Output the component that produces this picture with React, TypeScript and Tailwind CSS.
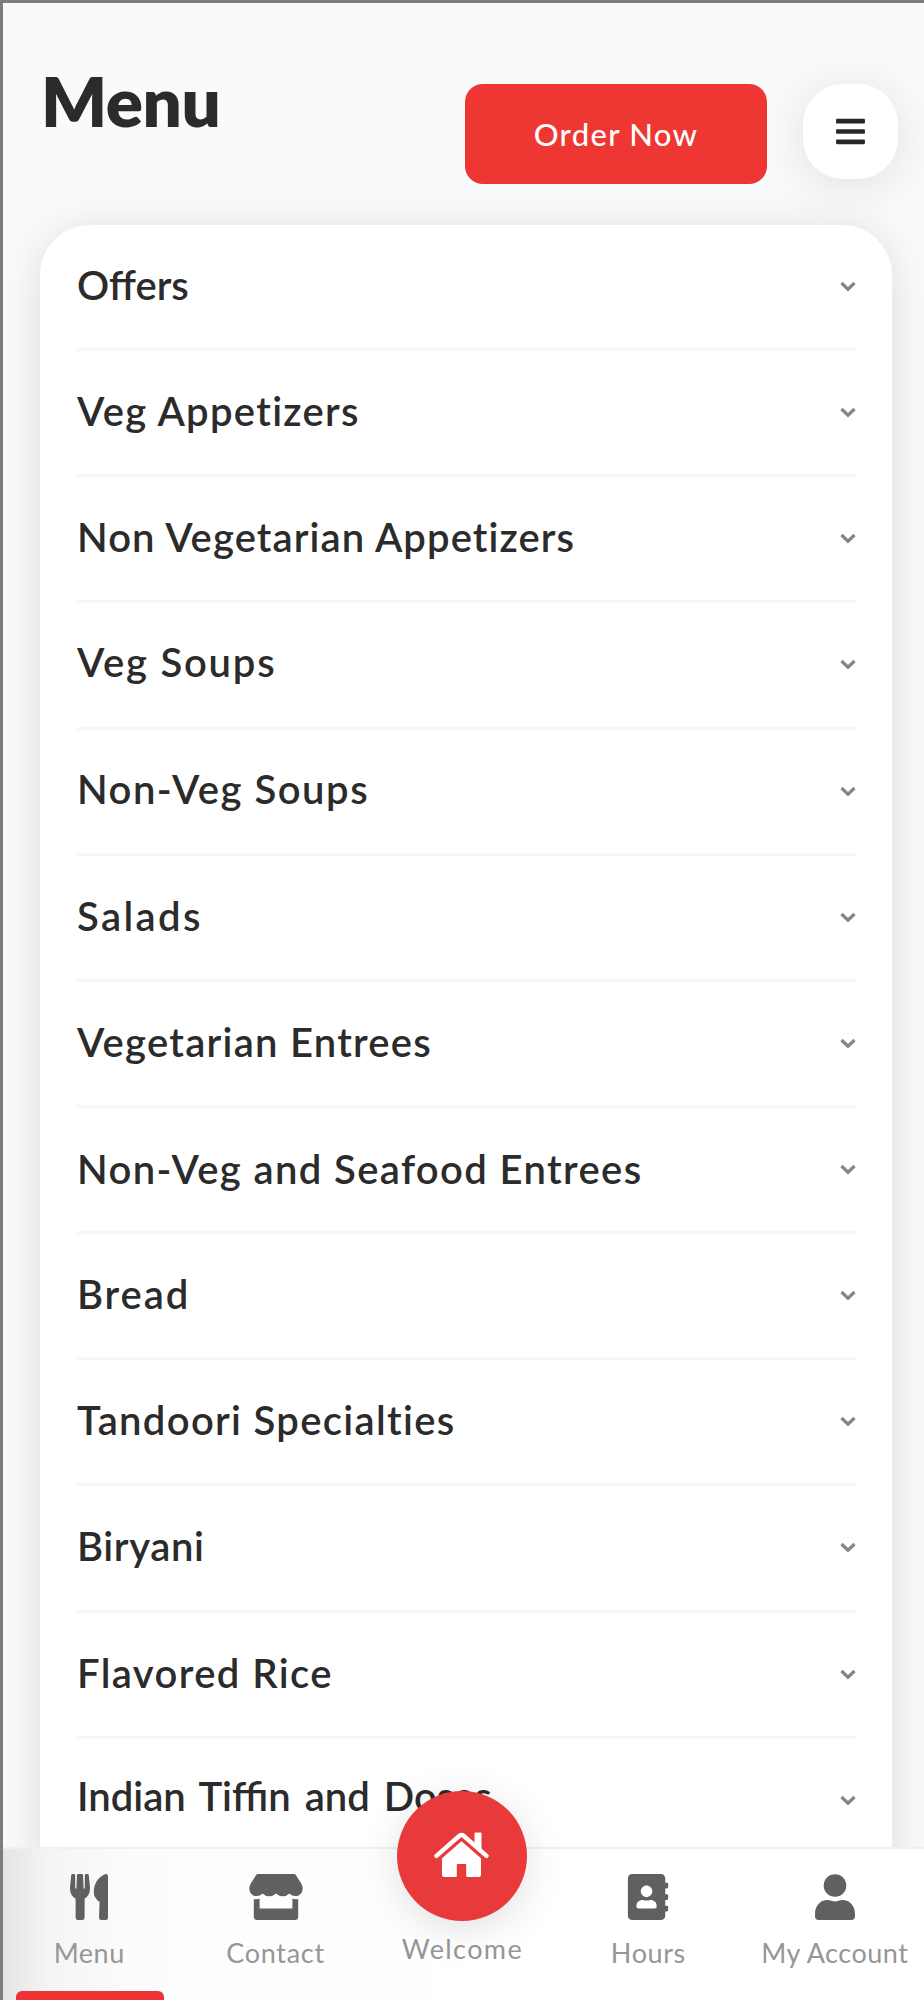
import type { ReactNode } from 'react'
import { FaAddressBook, FaBars } from 'react-icons/fa'

type Category = {
  name: string
  spacing: string
}

const categories: Category[] = [
  { name: 'Offers', spacing: 'tracking-normal pb-1' },
  { name: 'Veg Appetizers', spacing: 'tracking-[1.3px] pb-[3px]' },
  { name: 'Non Vegetarian Appetizers', spacing: 'tracking-[1.08px] pb-[3px]' },
  { name: 'Veg Soups', spacing: 'tracking-[1.75px] pb-1.5' },
  { name: 'Non-Veg Soups', spacing: 'tracking-[1.5px] pb-1' },
  { name: 'Salads', spacing: 'tracking-[2.4px] pb-[3px]' },
  { name: 'Vegetarian Entrees', spacing: 'tracking-[1.25px] pb-[3px]' },
  { name: 'Non-Veg and Seafood Entrees', spacing: 'tracking-[1.37px] pb-0.5' },
  { name: 'Bread', spacing: 'tracking-[1.9px] pb-1' },
  { name: 'Tandoori Specialties', spacing: 'tracking-[1.32px] pb-1' },
  { name: 'Biryani', spacing: 'tracking-[0.6px] pb-[3px]' },
  { name: 'Flavored Rice', spacing: 'tracking-[1.4px] pb-[3px]' },
  { name: 'Indian Tiffin and Dosas', spacing: '[word-spacing:4px] pb-2' },
]

function Chevron() {
  return (
    <svg viewBox="0 0 16 11" className="h-[11px] w-4 shrink-0" fill="none" stroke="#858585" strokeWidth="3.2">
      <path d="M1.5 2 8 8.2 14.5 2" />
    </svg>
  )
}

function UtensilsIcon() {
  return (
    <svg viewBox="0 0 38 46" className="h-[46px] w-[38px]" fill="currentColor">
      <path d="M1.2 1.2Q1.5 0 2.8 0H4Q5.2 0 5.2 1.3V14.5H6.4L7 1.3Q7.1 0 8.3 0H11.7Q12.9 0 13 1.3L13.6 14.5H14.8V1.3Q14.8 0 16 0H17.2Q18.5 0 18.8 1.2L20 13.5Q20.2 21.5 14.6 24.8V43.5Q14.6 46 12.3 46H7.9Q5.6 46 5.6 43.5V24.8Q-.2 21.5 0 13.5Z" />
      <path d="M38 2.2V43.7Q38 46 35.7 46H31.3Q29 46 29 43.5L29.6 28Q23.5 24 23.8 17.5C24 9 29 2 35.8 0Q38 0 38 2.2Z" />
    </svg>
  )
}

function StoreIcon() {
  return (
    <svg viewBox="0 0 54 46" className="h-[46px] w-[54px]" fill="currentColor">
      <path d="M9.5 0H44.5Q46.3 0 47.2 1.4L52.5 10C55.2 14.8 53 21 47.8 22Q43.3 22.6 40.5 19.5Q37.6 22.3 33.8 22.3T27 19.5Q24 22.3 20.2 22.3T13.5 19.5Q10.7 22.6 6.2 22C1 21 -1.2 14.8 1.5 10L6.8 1.4Q7.7 0 9.5 0Z" />
      <path d="M4.8 25Q7.8 25.6 10.6 24.8V34.5H43.4V24.8Q46.2 25.6 49.2 25V42.8Q49.2 46 46 46H8Q4.8 46 4.8 42.8Z" />
    </svg>
  )
}

function HouseIcon() {
  return (
    <svg viewBox="0 0 55 45" className="-mt-1 h-[45px] w-[55px]" fill="currentColor">
      <path
        d="M2.5 23.8 25.4 3.8Q27.5 2.2 29.6 3.8L52.5 23.8"
        fill="none"
        stroke="currentColor"
        strokeWidth="4.4"
        strokeLinecap="round"
      />
      <path d="M40.5 1.5Q40.5.5 41.5.5H46.5Q47.5.5 47.5 1.5V18.5L40.5 12.5Z" />
      <path d="M27.5 9.2 47 26.3V43Q47 45 45 45H33.2Q32.2 45 32.2 44V33Q32.2 32 31.2 32H23.8Q22.8 32 22.8 33V44Q22.8 45 21.8 45H10Q8 45 8 43V26.3Z" />
    </svg>
  )
}

function UserIcon() {
  return (
    <svg viewBox="0 0 40 46" className="h-[46px] w-10" fill="currentColor">
      <circle cx="20" cy="11.5" r="11.3" />
      <path d="M11.5 26Q15 26 16.5 26.8Q20 28 23.5 26.8Q25 26 28.5 26C35.5 26.5 40 32.5 40 40V42.2Q40 46 36.2 46H3.8Q0 46 0 42.2V40C0 32.5 4.5 26.5 11.5 26Z" />
    </svg>
  )
}

function CategoryRow({ name, spacing }: Category) {
  return (
    <button className="flex h-[126.15px] w-full shrink-0 items-center justify-between border-b-[3px] border-[#f7f7f7] text-left">
      <span className={`text-[40px] leading-[48px] font-semibold whitespace-nowrap text-[#2b2b2b] ${spacing}`}>{name}</span>
      <Chevron />
    </button>
  )
}

type NavItemProps = {
  label: string
  tracking: string
  children: ReactNode
}

function NavItem({ label, tracking, children }: NavItemProps) {
  return (
    <a className="flex w-[186.4px] shrink-0 flex-col items-center pt-[25px] text-[#606060]">
      {children}
      <span className={`mt-[15px] text-[27px] leading-9 whitespace-nowrap text-[#969696] ${tracking}`}>{label}</span>
    </a>
  )
}

export default function App() {
  return (
    <div className="relative flex h-[2000px] w-[924px] flex-col overflow-hidden border-t-[3px] border-l-[3px] border-[#7d7d7d] bg-[#f9fbfb] font-['Lato','Open_Sans',sans-serif]">
      <header className="flex h-[222px] shrink-0 items-start pl-[38px]">
        <h1 className="mt-[57px] text-[69px] leading-[82px] font-extrabold tracking-[-0.4px] text-[#2b2b2b]">Menu</h1>
        <div className="mt-[81px] mr-[26px] ml-auto flex items-start gap-9">
          <button className="flex h-[100px] w-[302px] items-center justify-center rounded-[18px] bg-[#ee3633] text-[31px] font-medium tracking-[1.3px] text-white">
            Order Now
          </button>
          <button className="flex size-[95px] items-center justify-center rounded-[40px] bg-white text-[#28282c] shadow-[0_6px_50px_rgba(0,0,0,0.11)]">
            <FaBars size={33} />
          </button>
        </div>
      </header>

      <main className="mr-8 ml-[37px] flex h-[1700px] shrink-0 flex-col rounded-[50px] bg-white pr-9 pl-[37px] shadow-[0_5px_44px_rgba(0,0,0,0.12)]">
        {categories.map((category) => (
          <CategoryRow key={category.name} {...category} />
        ))}
      </main>

      <nav className="absolute bottom-0 left-0 h-[153px] w-full border-t-2 border-[#f0f0f0] bg-[linear-gradient(90deg,#e5e5e5_0,#f5f5f5_50px,#fcfcfc_130px,#fff_500px)]">
        <div className="-ml-[7px] flex">
          <NavItem label="Menu" tracking="tracking-[0.5px]">
            <UtensilsIcon />
          </NavItem>
          <NavItem label="Contact" tracking="tracking-[0.7px]">
            <StoreIcon />
          </NavItem>
          <a className="relative flex w-[186.4px] shrink-0 flex-col items-center">
            <span className="absolute -top-[58px] flex size-[130px] items-center justify-center rounded-full bg-[#e83a3b] text-white shadow-[0_8px_40px_rgba(0,0,0,0.12)]">
              <HouseIcon />
            </span>
            <span className="mt-[82px] pl-px text-[27px] leading-9 tracking-[1.4px] text-[#969696]">Welcome</span>
          </a>
          <NavItem label="Hours" tracking="tracking-[0.6px]">
            <FaAddressBook size={46} />
          </NavItem>
          <NavItem label="My Account" tracking="tracking-[0.5px]">
            <UserIcon />
          </NavItem>
        </div>
        <span className="absolute bottom-0 left-[13px] h-[9px] w-[148px] rounded-t-md bg-[#ec3335]" />
      </nav>
    </div>
  )
}
